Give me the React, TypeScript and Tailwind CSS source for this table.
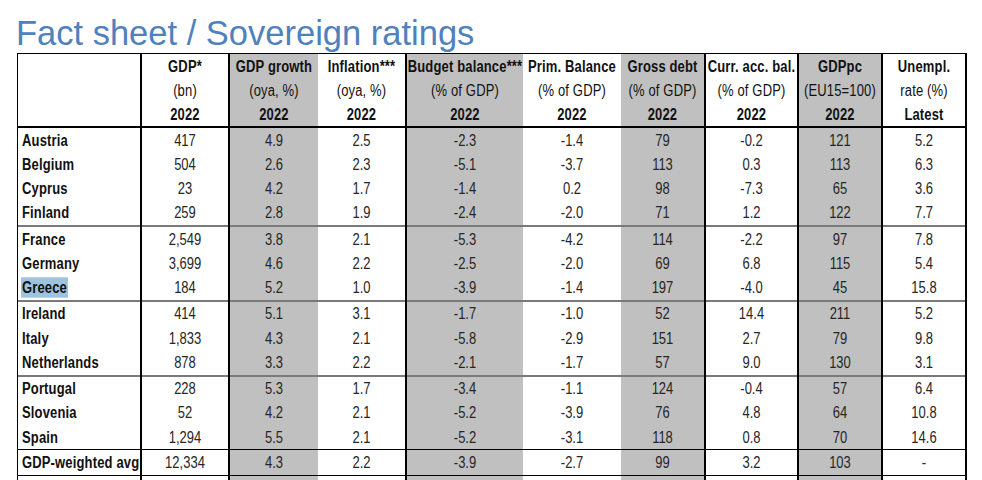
import React from "react";

const colCls = [
  "border-r-2 border-black",
  "border-r-2 border-black",
  "bg-[#c0c0c0]",
  "border-r-2 border-black",
  "bg-[#c0c0c0]",
  "",
  "bg-[#c0c0c0] border-r-2 border-black",
  "border-r-2 border-black",
  "bg-[#c0c0c0] border-r-2 border-black",
  "",
];

const gridCls =
  "grid grid-cols-[124px_88px_88px_89px_116px_98px_85px_93px_84px_82px]";

const headers: string[][] = [
  ["", "", ""],
  ["GDP*", "(bn)", "2022"],
  ["GDP growth", "(oya, %)", "2022"],
  ["Inflation***", "(oya, %)", "2022"],
  ["Budget balance***", "(% of GDP)", "2022"],
  ["Prim. Balance", "(% of GDP)", "2022"],
  ["Gross debt", "(% of GDP)", "2022"],
  ["Curr. acc. bal.", "(% of GDP)", "2022"],
  ["GDPpc", "(EU15=100)", "2022"],
  ["Unempl.", "rate (%)", "Latest"],
];

const groups: string[][][] = [
  [
    ["Austria", "417", "4.9", "2.5", "-2.3", "-1.4", "79", "-0.2", "121", "5.2"],
    ["Belgium", "504", "2.6", "2.3", "-5.1", "-3.7", "113", "0.3", "113", "6.3"],
    ["Cyprus", "23", "4.2", "1.7", "-1.4", "0.2", "98", "-7.3", "65", "3.6"],
    ["Finland", "259", "2.8", "1.9", "-2.4", "-2.0", "71", "1.2", "122", "7.7"],
  ],
  [
    ["France", "2,549", "3.8", "2.1", "-5.3", "-4.2", "114", "-2.2", "97", "7.8"],
    ["Germany", "3,699", "4.6", "2.2", "-2.5", "-2.0", "69", "6.8", "115", "5.4"],
    ["Greece", "184", "5.2", "1.0", "-3.9", "-1.4", "197", "-4.0", "45", "15.8"],
  ],
  [
    ["Ireland", "414", "5.1", "3.1", "-1.7", "-1.0", "52", "14.4", "211", "5.2"],
    ["Italy", "1,833", "4.3", "2.1", "-5.8", "-2.9", "151", "2.7", "79", "9.8"],
    ["Netherlands", "878", "3.3", "2.2", "-2.1", "-1.7", "57", "9.0", "130", "3.1"],
  ],
  [
    ["Portugal", "228", "5.3", "1.7", "-3.4", "-1.1", "124", "-0.4", "57", "6.4"],
    ["Slovenia", "52", "4.2", "2.1", "-5.2", "-3.9", "76", "4.8", "64", "10.8"],
    ["Spain", "1,294", "5.5", "2.1", "-5.2", "-3.1", "118", "0.8", "70", "14.6"],
  ],
];

const avgRow = ["GDP-weighted avg", "12,334", "4.3", "2.2", "-3.9", "-2.7", "99", "3.2", "103", "-"];

function DataRow({ row }: { row: string[] }) {
  return (
    <div className={gridCls}>
      {row.map((v, i) => (
        <div
          key={i}
          className={`h-[24.25px] flex items-center ${colCls[i]} ${
            i === 0 ? "justify-start pl-[4px]" : "justify-center"
          }`}
        >
          {i === 0 ? (
            <span
              className={`inline-block scale-y-[1.2] font-bold text-[#111] whitespace-nowrap tracking-[0.15px] ${
                v === "Greece" ? "bg-[#9ec3e0] py-[1px] px-[1px] -ml-[1px]" : ""
              }`}
            >
              {v}
            </span>
          ) : (
            <span className="inline-block scale-y-[1.2] text-[#262626] whitespace-nowrap">{v}</span>
          )}
        </div>
      ))}
    </div>
  );
}

function SepRow({ kind }: { kind: "gray" | "black" }) {
  return (
    <div className={gridCls}>
      {colCls.map((c, i) => (
        <div
          key={i}
          className={`${kind === "gray" ? "h-[2px] bg-[#7a7a7a]" : "h-[1px] bg-black"} ${
            c.includes("border-r-2") ? "border-r-2 border-black" : ""
          }`}
        />
      ))}
    </div>
  );
}

export default function App() {
  return (
    <div className="w-[982px] h-[480px] overflow-hidden bg-white font-['Liberation_Sans',Arial,sans-serif]">
      <div className="h-[53px] pt-[14px] pl-[16px] text-[34.5px] leading-[38px] text-[#4f81bd] whitespace-nowrap">
        Fact sheet / Sovereign ratings
      </div>
      <div className="ml-[17px] w-[950px] border-l border-t border-r-2 border-black text-[13px] leading-[15px]">
        <div className={gridCls}>
          {headers.map((h, i) => (
            <div
              key={i}
              className={`h-[74px] border-b-2 border-black flex flex-col ${colCls[i]}`}
            >
              {h.map((t, j) => (
                <div key={j} className="h-[24px] flex items-center justify-center">
                  <span
                    className={`inline-block scale-y-[1.2] whitespace-nowrap text-[#111] tracking-[0.15px] ${
                      j === 1 ? "font-normal" : "font-bold"
                    }`}
                  >
                    {t}
                  </span>
                </div>
              ))}
            </div>
          ))}
        </div>
        {groups.map((g, gi) => (
          <div key={gi}>
            {g.map((r, ri) => (
              <DataRow key={ri} row={r} />
            ))}
            <SepRow kind={gi === groups.length - 1 ? "black" : "gray"} />
          </div>
        ))}
        <DataRow row={avgRow} />
        <SepRow kind="black" />
        <DataRow row={["", "", "", "", "", "", "", "", "", ""]} />
      </div>
    </div>
  );
}
